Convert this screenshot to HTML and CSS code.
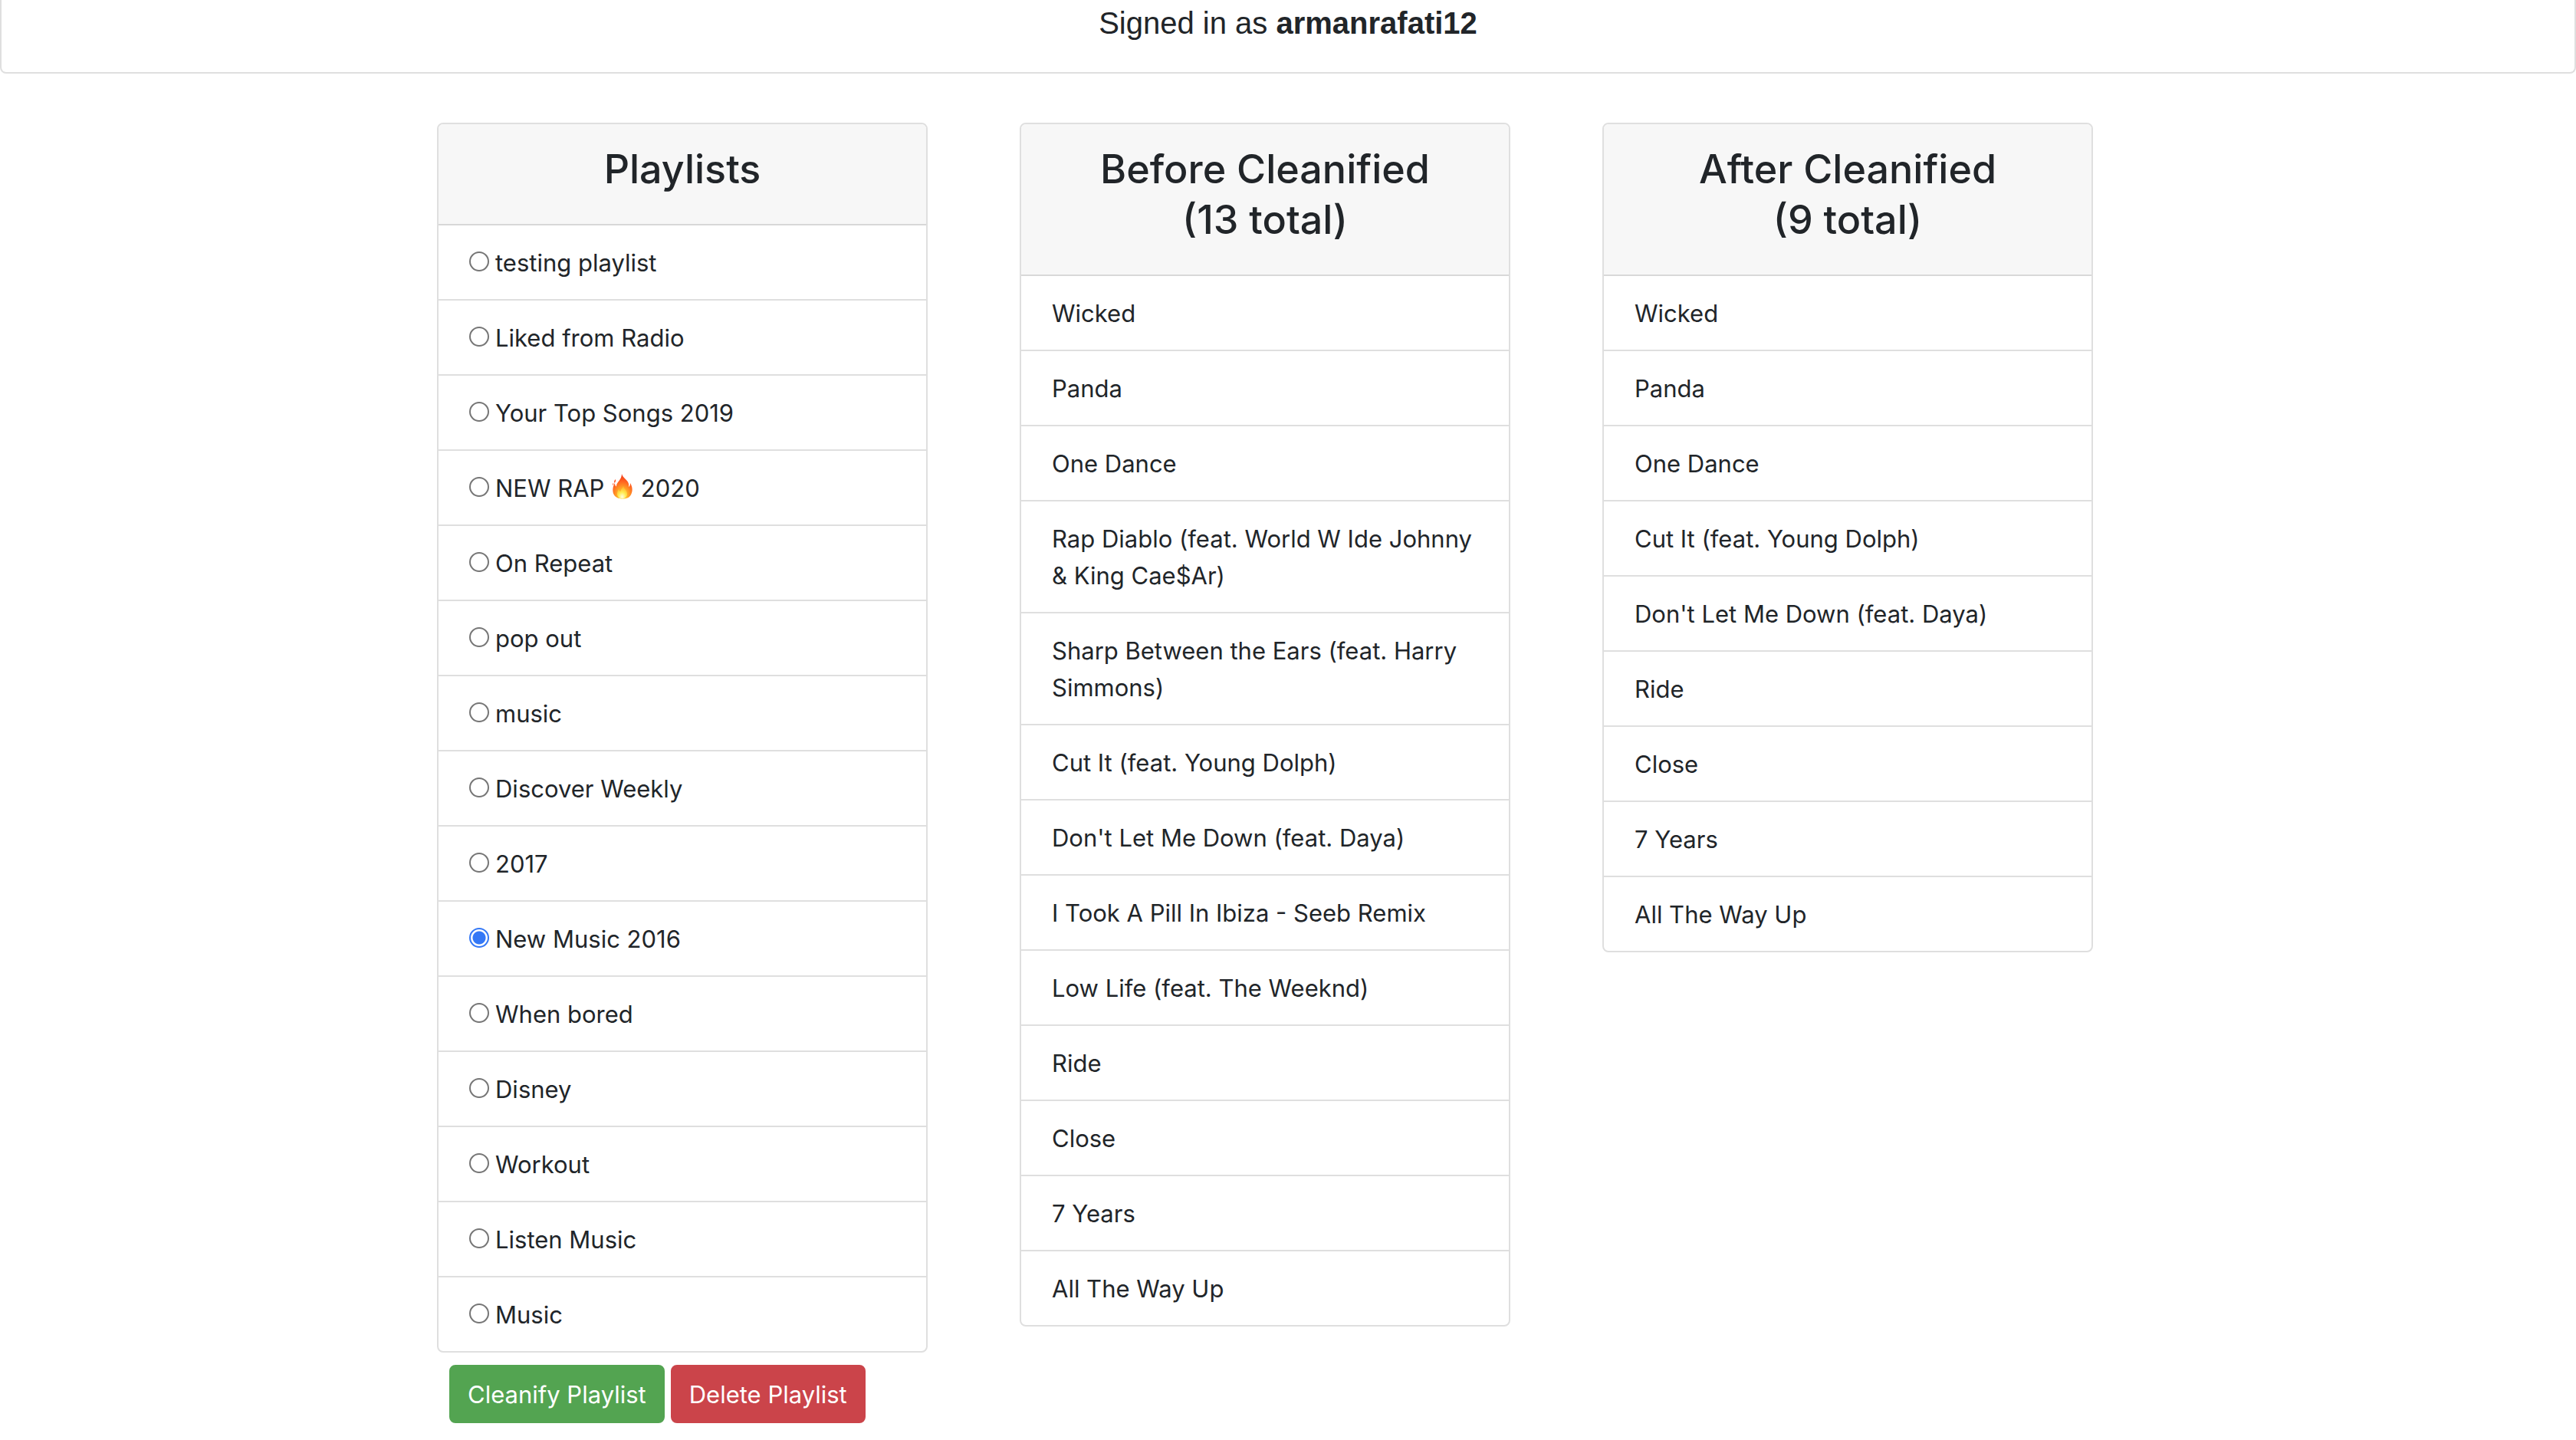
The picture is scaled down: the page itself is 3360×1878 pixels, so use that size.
FILE: index.html
```html
<!DOCTYPE html>
<html lang="en">
<head>
<meta charset="utf-8">
<title>Cleanify</title>
<link rel="stylesheet" href="styles.css">
</head>
<body>
<header class="account">Signed in as <strong>armanrafati12</strong></header>
<main class="container">
  <form class="column">
    <section class="card">
      <h3 class="card-header">Playlists</h3>
      <ul class="list">
        <li class="item"><label class="choice"><input type="radio" name="playlist">testing playlist</label></li>
        <li class="item"><label class="choice"><input type="radio" name="playlist">Liked from Radio</label></li>
        <li class="item"><label class="choice"><input type="radio" name="playlist">Your Top Songs 2019</label></li>
        <li class="item"><label class="choice"><input type="radio" name="playlist"><span>NEW RAP <svg class="fire" viewBox="3 4 34 34" role="img" aria-label="fire">
          <defs>
            <radialGradient id="flame" cx="50%" cy="88%" r="85%"><stop offset="0" stop-color="#ffdf35"/><stop offset=".38" stop-color="#ffa126"/><stop offset=".68" stop-color="#ff6220"/><stop offset="1" stop-color="#f23a18"/></radialGradient>
            <radialGradient id="core" cx="50%" cy="85%" r="75%"><stop offset="0" stop-color="#fffde0"/><stop offset=".5" stop-color="#ffeb50"/><stop offset="1" stop-color="#ffb52c"/></radialGradient>
          </defs>
          <path fill="url(#flame)" d="M19 5c1 5 8 8 9 13 .4 2 0 3 .2 4 1.300-1 2-3 1.800-5 3 5 3.500 10 1.300 14.500C29.500 36 25 37.500 20 37.500S10 35.500 8.200 31C6.500 26 7.500 21 10 17c0 2 .5 3.500 2 4.500C11.500 16 19 13 19 5Z"/>
          <path fill="#ff5a2a" d="M11 12c-2 1.500-2.500 3.500-1.500 5 1.500-1.500 2-3 1.500-5ZM8 17c-1 .5-1 2-.5 3 1-1 1-2 .5-3Z"/>
          <path fill="url(#core)" d="M21 21c1 4 5 5 5 10 0 4-3 6.500-6.500 6.500S13 35 13 31c0-3 1-4 2-6 .5 1.500 1 2.500 2.500 3C17.500 25 20 24 21 21Z"/>
        </svg> 2020</span></label></li>
        <li class="item"><label class="choice"><input type="radio" name="playlist">On Repeat</label></li>
        <li class="item"><label class="choice"><input type="radio" name="playlist">pop out</label></li>
        <li class="item"><label class="choice"><input type="radio" name="playlist">music</label></li>
        <li class="item"><label class="choice"><input type="radio" name="playlist">Discover Weekly</label></li>
        <li class="item"><label class="choice"><input type="radio" name="playlist">2017</label></li>
        <li class="item"><label class="choice"><input type="radio" name="playlist" checked>New Music 2016</label></li>
        <li class="item"><label class="choice"><input type="radio" name="playlist">When bored</label></li>
        <li class="item"><label class="choice"><input type="radio" name="playlist">Disney</label></li>
        <li class="item"><label class="choice"><input type="radio" name="playlist">Workout</label></li>
        <li class="item"><label class="choice"><input type="radio" name="playlist">Listen Music</label></li>
        <li class="item"><label class="choice"><input type="radio" name="playlist">Music</label></li>
      </ul>
    </section>
    <div class="actions">
      <button class="btn btn-success" type="button">Cleanify Playlist</button>
      <button class="btn btn-danger" type="button">Delete Playlist</button>
    </div>
  </form>
  <div class="column">
    <section class="card">
      <h3 class="card-header">Before Cleanified<br>(13 total)</h3>
      <ul class="list">
        <li class="item">Wicked</li>
        <li class="item">Panda</li>
        <li class="item">One Dance</li>
        <li class="item">Rap Diablo (feat. World W Ide Johnny &amp; King Cae$Ar)</li>
        <li class="item">Sharp Between the Ears (feat. Harry Simmons)</li>
        <li class="item">Cut It (feat. Young Dolph)</li>
        <li class="item">Don't Let Me Down (feat. Daya)</li>
        <li class="item">I Took A Pill In Ibiza - Seeb Remix</li>
        <li class="item">Low Life (feat. The Weeknd)</li>
        <li class="item">Ride</li>
        <li class="item">Close</li>
        <li class="item">7 Years</li>
        <li class="item">All The Way Up</li>
      </ul>
    </section>
  </div>
  <div class="column">
    <section class="card">
      <h3 class="card-header">After Cleanified<br>(9 total)</h3>
      <ul class="list">
        <li class="item">Wicked</li>
        <li class="item">Panda</li>
        <li class="item">One Dance</li>
        <li class="item">Cut It (feat. Young Dolph)</li>
        <li class="item">Don't Let Me Down (feat. Daya)</li>
        <li class="item">Ride</li>
        <li class="item">Close</li>
        <li class="item">7 Years</li>
        <li class="item">All The Way Up</li>
      </ul>
    </section>
  </div>
</main>
</body>
</html>
```
FILE: styles.css
```css
*, *::before, *::after { box-sizing: border-box; }

body {
  margin: 0;
  background: #fff;
  color: #212529;
  font: 400 31px/48px Inter, "Liberation Sans", sans-serif;
}

.account {
  padding-bottom: 34px;
  border: 2px solid #dfdfdf;
  border-top: 0;
  border-radius: 0 0 8px 8px;
  font: 400 40px/60px "Liberation Sans", Arial, sans-serif;
  text-align: center;
}

.container {
  display: grid;
  grid-template-columns: repeat(3, 1fr);
  max-width: 2280px;
  margin: 64px auto 0;
}

.column { padding: 0 30px; }

.card {
  max-width: 640px;
  overflow: hidden;
  border: 2px solid #dfdfdf;
  border-radius: 8px;
}

.card-header {
  margin: 0;
  padding: 26px 40px 38px;
  border-bottom: 2px solid #d8d8d8;
  background: #f7f7f7;
  font-size: 52px;
  font-weight: 500;
  line-height: 66px;
  text-align: center;
}

.list {
  margin: 0;
  padding: 0;
  list-style: none;
}

.item { padding: 25px 40px 23px; }
.item + .item { border-top: 2px solid #dfdfdf; }

.choice {
  display: flex;
  align-items: center;
  gap: 8px;
}

.choice input {
  appearance: none;
  width: 26px;
  height: 26px;
  margin: 0 0 4px;
  border: 2px solid #767676;
  border-radius: 50%;
  background: #fff;
}

.choice input:checked {
  border-color: #3478f6;
  background: radial-gradient(circle, #3478f6 8px, #fff 9px);
}

.fire {
  width: 34px;
  height: 34px;
  margin: 0 -2px;
  vertical-align: -3px;
}

.actions {
  display: flex;
  gap: 8px;
  padding: 16px;
}

.btn {
  padding: 13px 22px 11px;
  border: 2px solid;
  border-radius: 8px;
  color: #fff;
  font: inherit;
}

.btn-success { border-color: #53a451; background: #53a451; }
.btn-danger { border-color: #cb444a; background: #cb444a; }
```
